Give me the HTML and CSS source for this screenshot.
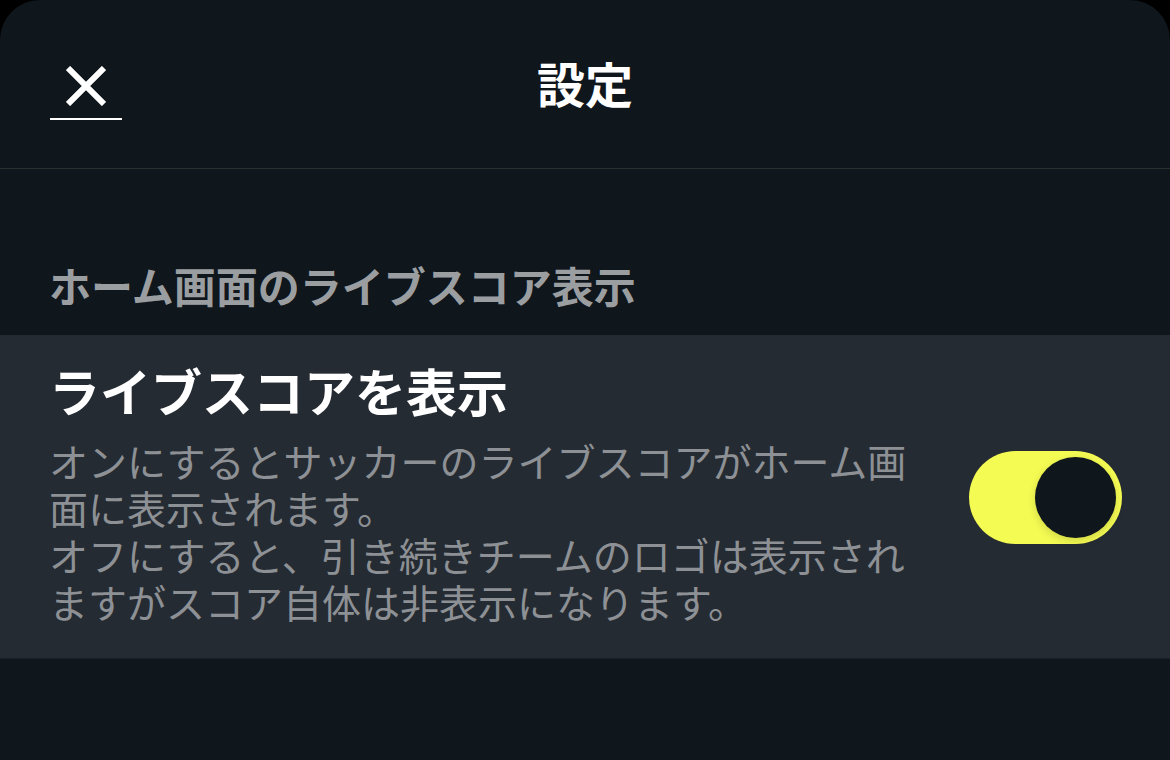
FILE: index.html
```html
<!DOCTYPE html>
<html lang="ja">
<head>
    <meta charset="UTF-8">
    <meta name="viewport" content="width=device-width, initial-scale=1.0">
    <title>設定</title>
    <link rel="stylesheet" href="styles.css">
</head>
<body>
    <div class="sheet">
        <header class="sheet-header">
            <button class="close-btn" type="button" aria-label="閉じる">
                <svg width="40" height="40" viewBox="0 0 40 40">
                    <path d="M2 2 L38 38 M38 2 L2 38" stroke="#fff" stroke-width="6" fill="none"/>
                </svg>
            </button>
            <h1 class="sheet-title">設定</h1>
            <div></div>
        </header>

        <h2 class="section-title">ホーム画面のライブスコア表示</h2>

        <div class="setting-row">
            <div class="setting-text">
                <p class="setting-name">ライブスコアを表示</p>
                <p class="setting-desc">オンにするとサッカーのライブスコアがホーム画面に表示されます。<br>オフにすると、引き続きチームのロゴは表示されますがスコア自体は非表示になります。</p>
            </div>
            <label class="switch">
                <input type="checkbox" checked>
                <span class="switch-knob"></span>
            </label>
        </div>
    </div>
</body>
</html>
```

FILE: styles.css
```css
/* General */
body {
    margin: 0;
    background-color: #000;
    font-family: "Noto Sans CJK JP", "Noto Sans", sans-serif;
}

.sheet {
    height: 760px;
    background-color: #0f161c;
    border-radius: 40px 40px 0 0;
    overflow: hidden;
}

/* Header */
.sheet-header {
    height: 168px;
    display: grid;
    grid-template-columns: 1fr auto 1fr;
    align-items: center;
    border-bottom: 1px solid #27322e;
}

.close-btn {
    align-self: start;
    justify-self: start;
    margin: 66px 0 0 50px;
    width: 72px;
    padding: 0 0 12px;
    background: none;
    border: none;
    border-bottom: 2px solid #fff;
    display: flex;
    justify-content: center;
    cursor: pointer;
}

.close-btn svg {
    display: block;
}

.sheet-title {
    margin: -5px 0 0;
    color: #fff;
    font-size: 48px;
    font-weight: 700;
    line-height: 60px;
}

/* Section */
.section-title {
    margin: 91px 0 25px 49px;
    color: #9b9ea1;
    font-size: 42px;
    font-weight: 700;
    line-height: 50px;
}

.setting-row {
    display: flex;
    align-items: center;
    justify-content: space-between;
    padding: 25px 48px 33px 49px;
    background-color: #252b32;
    border-bottom: 1px solid #1a2026;
}

.setting-text {
    width: 870px;
}

.setting-name {
    margin: 0;
    color: #fff;
    font-size: 51px;
    font-weight: 700;
    line-height: 60px;
}

.setting-desc {
    margin: 17px 0 0;
    color: #8d9195;
    font-size: 39px;
    line-height: 47px;
}

/* Toggle */
.switch {
    position: relative;
    width: 153px;
    height: 93px;
    margin-top: 10px;
    border-radius: 47px;
    background-color: #f4fb53;
    flex-shrink: 0;
}

.switch input {
    display: none;
}

.switch-knob {
    position: absolute;
    top: 6px;
    right: 6px;
    width: 81px;
    height: 81px;
    border-radius: 50%;
    background-color: #0f161c;
    box-shadow: 0 3px 8px rgba(0, 0, 0, 0.15);
}
```
